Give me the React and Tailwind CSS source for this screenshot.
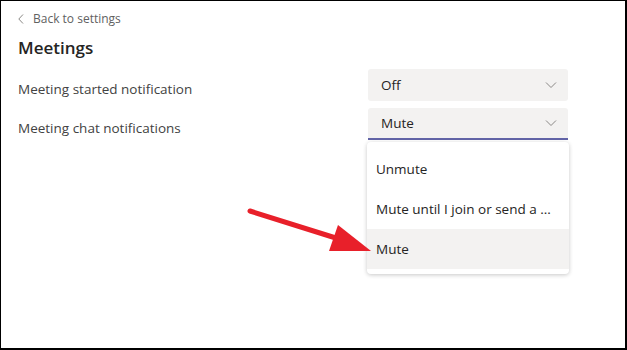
import React from 'react';

const Chevron = ({ className = '' }) => (
    <svg width="12" height="8" viewBox="0 0 12 8" className={className}>
        <path d="M1 1.5 L6 6.5 L11 1.5" fill="none" stroke="#8a8886" strokeWidth="1" />
    </svg>
);

const Select = ({ value, active }) => (
    <div
        className={`w-[200px] h-[32px] bg-[#f3f2f1] rounded-[3px] flex items-center justify-between pl-[13px] pr-[11px] text-[13.5px] text-[#252423] ${
            active ? 'border-b-2 border-[#6264a7] rounded-b-none' : ''
        }`}
    >
        <span>{value}</span>
        <Chevron />
    </div>
);

const menuItems = ['Unmute', 'Mute until I join or send a ...', 'Mute'];

export default function App() {
    return (
        <div
            className="relative w-[627px] h-[350px] bg-white border-t border-l border-r-2 border-b-2 border-black overflow-hidden"
            style={{ fontFamily: '"Open Sans", "Noto Sans", sans-serif' }}
        >
            <div className="pl-[17px] pt-[9px]">
                <div className="flex items-center gap-[9px] text-[12px] text-[#616161] h-[18px]">
                    <svg width="6" height="10" viewBox="0 0 6 10">
                        <path d="M5 0.5 L0.8 5 L5 9.5" fill="none" stroke="#8a8886" strokeWidth="1" />
                    </svg>
                    <span>Back to settings</span>
                </div>
                <h1 className="mt-[8px] text-[17px] font-semibold text-[#252423] leading-[24px]">Meetings</h1>

                <div className="mt-[9px] flex flex-col gap-[7px]">
                    <div className="flex items-start">
                        <span className="w-[350px] h-[32px] pt-[8px] flex items-center text-[13.5px] text-[#424242]">Meeting started notification</span>
                        <Select value="Off" />
                    </div>
                    <div className="flex items-start">
                        <span className="w-[350px] h-[32px] pt-[8px] flex items-center text-[13.5px] text-[#424242]">Meeting chat notifications</span>
                        <div className="flex flex-col">
                            <Select value="Mute" active />
                            <div className="mt-[2px] -ml-[1px] w-[202px] bg-white rounded-[4px] shadow-[0_1px_4px_rgba(0,0,0,0.22)] pt-[7px] pb-[5px]">
                                {menuItems.map((item) => (
                                    <div
                                        key={item}
                                        className={`h-[40px] flex items-center pl-[9px] text-[13.5px] text-[#252423] ${
                                            item === 'Mute' ? 'bg-[#f3f2f1]' : ''
                                        }`}
                                    >
                                        {item}
                                    </div>
                                ))}
                            </div>
                        </div>
                    </div>
                </div>
            </div>

            <svg className="absolute left-0 top-0 pointer-events-none" width="627" height="350">
                <line x1="249" y1="210" x2="338" y2="238" stroke="#e8202a" strokeWidth="5" strokeLinecap="round" />
                <polygon points="337,224 370,250 328,250" fill="#e8202a" />
            </svg>
        </div>
    );
}
